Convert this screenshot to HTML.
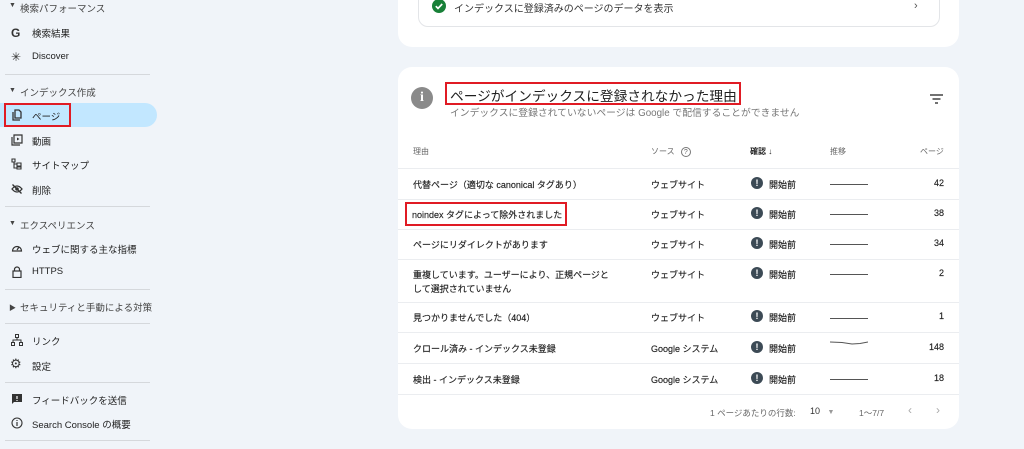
<!DOCTYPE html>
<html><head><meta charset="utf-8"><style>
*{box-sizing:border-box;margin:0;padding:0}
body{width:1024px;height:449px;overflow:hidden;background:#f0f4f9;font-family:"Liberation Sans","Noto Sans CJK JP",sans-serif;color:#1f1f1f;position:relative}
.a{position:absolute;white-space:nowrap}
.sb{font-size:9.5px;color:#1f1f1f}
.sec{font-size:9.5px;color:#444}
.hr{position:absolute;left:5px;width:145px;height:1px;background:#d5d8dc}
.ic{position:absolute;left:11px;width:12px;height:12px}
.card{position:absolute;background:#fff;border-radius:14px}
.t{font-size:9px;color:#1f1f1f;-webkit-text-stroke:0.15px #1f1f1f}
.row{position:absolute;left:398px;width:561px;height:1px;background:#ebedf0}
.ex{position:absolute;left:751px;width:12px;height:12px;border-radius:50%;background:#3c4a55;color:#fff;font-size:9px;font-weight:bold;text-align:center;line-height:12px}
.spark{position:absolute;left:830px;width:38px;height:1px;background:#555}
</style></head><body>
<!-- sidebar -->
<div class="a sec" style="left:9px;top:2px;font-size:7px">▼</div><div class="a sec" style="left:20px;top:1px">検索パフォーマンス</div>
<div class="a" style="left:11px;top:26px;font-weight:bold;font-size:12px;color:#333">G</div><div class="a sb" style="left:32px;top:26px">検索結果</div>
<div class="a" style="left:11px;top:50px;font-size:12px;color:#333">✳</div><div class="a sb" style="left:32px;top:51px">Discover</div>
<div class="hr" style="top:74px"></div>
<div class="a sec" style="left:9px;top:87px;font-size:7px">▼</div><div class="a sec" style="left:20px;top:85px">インデックス作成</div>
<div class="a" style="left:0;top:103px;width:157px;height:24px;background:#c2e7ff;border-radius:0 12px 12px 0"></div>
<div class="a" style="left:4px;top:103px;width:67px;height:24px;border:2px solid #e01b24"></div>
<svg class="ic" style="top:109px" viewBox="0 0 12 12"><path d="M2 3v8h7M4 1h4l2 2v6H4z" fill="none" stroke="#333" stroke-width="1.3"/></svg>
<div class="a sb" style="left:32px;top:109px">ページ</div>
<svg class="ic" style="top:134px" viewBox="0 0 12 12"><path d="M1 3v8h8M3 1h8v8H3z" fill="none" stroke="#333" stroke-width="1.2"/><path d="M6 3.5v3l2.5-1.5z" fill="#333"/></svg>
<div class="a sb" style="left:32px;top:134px">動画</div>
<svg class="ic" style="top:158px" viewBox="0 0 12 12"><path d="M1 1h3v3H1zM3 4v6h3M3 6h3M6 5h4v3H6zM6 9h4v2H6z" fill="none" stroke="#333" stroke-width="1.1"/></svg>
<div class="a sb" style="left:32px;top:158px">サイトマップ</div>
<svg class="ic" style="top:183px" viewBox="0 0 12 12"><path d="M1 6q5-6 10 0q-5 6-10 0z" fill="none" stroke="#333" stroke-width="1.3"/><circle cx="6" cy="6" r="1.8" fill="#333"/><path d="M1.5 1.5l9 9" stroke="#333" stroke-width="1.3"/></svg>
<div class="a sb" style="left:32px;top:183px">削除</div>
<div class="hr" style="top:206px"></div>
<div class="a sec" style="left:9px;top:220px;font-size:7px">▼</div><div class="a sec" style="left:20px;top:218px">エクスペリエンス</div>
<svg class="ic" style="top:242px" viewBox="0 0 12 12"><path d="M1.5 9a4.5 4.5 0 1 1 9 0z" fill="none" stroke="#333" stroke-width="1.2"/><path d="M6 8l2-3" stroke="#333" stroke-width="1.2"/></svg>
<div class="a sb" style="left:32px;top:242px">ウェブに関する主な指標</div>
<svg class="ic" style="top:266px" viewBox="0 0 12 12"><rect x="2" y="5" width="8" height="6.5" fill="none" stroke="#333" stroke-width="1.2"/><path d="M3.5 5V3.5a2.5 2.5 0 0 1 5 0V5" fill="none" stroke="#333" stroke-width="1.2"/></svg>
<div class="a sb" style="left:32px;top:266px">HTTPS</div>
<div class="hr" style="top:289px"></div>
<div class="a sec" style="left:9px;top:303px;font-size:7px">▶</div><div class="a sec" style="left:20px;top:300px">セキュリティと手動による対策</div>
<div class="hr" style="top:323px"></div>
<svg class="ic" style="top:334px" viewBox="0 0 12 12"><path d="M4.5 .5h3v3h-3zM.5 8.5h3v3h-3zM8.5 8.5h3v3h-3zM6 3.5v2.5M2 8.5V6h8v2.5" fill="none" stroke="#333" stroke-width="1"/></svg>
<div class="a sb" style="left:32px;top:334px">リンク</div>
<div class="a" style="left:10px;top:356px;font-size:13px;color:#333">⚙</div>
<div class="a sb" style="left:32px;top:359px">設定</div>
<div class="hr" style="top:382px"></div>
<svg class="ic" style="top:393px" viewBox="0 0 12 12"><path d="M1 1h10v8H3l-2 2z" fill="#333"/><path d="M6 3v3M6 7v1" stroke="#fff" stroke-width="1.2"/></svg>
<div class="a sb" style="left:32px;top:393px">フィードバックを送信</div>
<svg class="ic" style="top:417px" viewBox="0 0 12 12"><circle cx="6" cy="6" r="5" fill="none" stroke="#333" stroke-width="1.1"/><path d="M6 5v4M6 3v1" stroke="#333" stroke-width="1.2"/></svg>
<div class="a sb" style="left:32px;top:417px">Search Console の概要</div>
<div class="hr" style="top:440px"></div>

<!-- top card -->
<div class="card" style="left:398px;top:-20px;width:561px;height:67px"></div>
<div class="a" style="left:418px;top:-10px;width:522px;height:37px;border:1px solid #e3e5e8;border-radius:10px"></div>
<svg class="a" style="left:432px;top:-1px" width="14" height="14" viewBox="0 0 14 14"><circle cx="7" cy="7" r="7" fill="#188038"/><path d="M3.8 7.2l2.2 2.2 4.2-4.4" fill="none" stroke="#fff" stroke-width="1.7"/></svg>
<div class="a" style="left:454px;top:0px;font-size:10px;color:#333">インデックスに登録済みのページのデータを表示</div>
<div class="a" style="left:914px;top:0px;font-size:11px;color:#555">›</div>

<!-- main card -->
<div class="card" style="left:398px;top:67px;width:561px;height:362px"></div>
<div class="a" style="left:411px;top:87px;width:22px;height:22px;border-radius:50%;background:#8a8a8a;color:#fff;font-weight:bold;font-size:14px;text-align:center;line-height:22px;font-family:'Liberation Serif',serif">i</div>
<div class="a" style="left:445px;top:82px;width:296px;height:23px;border:2px solid #e01b24"></div>
<div class="a" style="left:450px;top:85px;font-size:13.7px;color:#1f1f1f">ページがインデックスに登録されなかった理由</div>
<div class="a" style="left:450px;top:105px;font-size:9.8px;color:#777">インデックスに登録されていないページは Google で配信することができません</div>
<svg class="a" style="left:930px;top:94px" width="13" height="10" viewBox="0 0 13 10"><path d="M0 1h13M2.5 5h8M5 9h3" stroke="#444" stroke-width="1.4"/></svg>

<div class="a" style="left:413px;top:146px;font-size:8px;color:#666">理由</div>
<div class="a" style="left:651px;top:146px;font-size:8px;color:#666">ソース <span style="display:inline-block;width:10px;height:10px;border:1px solid #777;border-radius:50%;font-size:7px;text-align:center;line-height:9px;margin-left:4px">?</span></div>
<div class="a" style="left:750px;top:146px;font-size:8px;color:#222;font-weight:bold">確認 <span style="font-weight:normal">↓</span></div>
<div class="a" style="left:830px;top:146px;font-size:8px;color:#666">推移</div>
<div class="a" style="left:920px;top:146px;font-size:8px;color:#666">ページ</div>

<div class="row" style="top:168px"></div>
<div class="row" style="top:199px"></div>
<div class="row" style="top:229px"></div>
<div class="row" style="top:259px"></div>
<div class="row" style="top:302px"></div>
<div class="row" style="top:332px"></div>
<div class="row" style="top:363px"></div>
<div class="row" style="top:394px"></div>

<div class="a t" style="left:413px;top:178px">代替ページ（適切な canonical タグあり）</div>
<div class="a t" style="left:412px;top:208px">noindex タグによって除外されました</div>
<div class="a" style="left:405px;top:202px;width:162px;height:24px;border:2px solid #e01b24"></div>
<div class="a t" style="left:413px;top:238px">ページにリダイレクトがあります</div>
<div class="a t" style="left:413px;top:268px;white-space:normal;width:200px;line-height:14px">重複しています。ユーザーにより、正規ページとして選択されていません</div>
<div class="a t" style="left:413px;top:311px">見つかりませんでした（404）</div>
<div class="a t" style="left:413px;top:342px">クロール済み - インデックス未登録</div>
<div class="a t" style="left:413px;top:373px">検出 - インデックス未登録</div>

<div class="a t" style="left:651px;top:178px">ウェブサイト</div>
<div class="a t" style="left:651px;top:208px">ウェブサイト</div>
<div class="a t" style="left:651px;top:238px">ウェブサイト</div>
<div class="a t" style="left:651px;top:268px">ウェブサイト</div>
<div class="a t" style="left:651px;top:311px">ウェブサイト</div>
<div class="a t" style="left:651px;top:342px">Google システム</div>
<div class="a t" style="left:651px;top:373px">Google システム</div>

<div class="ex" style="top:177px">!</div><div class="a t" style="left:769px;top:178px">開始前</div>
<div class="ex" style="top:207px">!</div><div class="a t" style="left:769px;top:208px">開始前</div>
<div class="ex" style="top:237px">!</div><div class="a t" style="left:769px;top:238px">開始前</div>
<div class="ex" style="top:267px">!</div><div class="a t" style="left:769px;top:268px">開始前</div>
<div class="ex" style="top:310px">!</div><div class="a t" style="left:769px;top:311px">開始前</div>
<div class="ex" style="top:341px">!</div><div class="a t" style="left:769px;top:342px">開始前</div>
<div class="ex" style="top:372px">!</div><div class="a t" style="left:769px;top:373px">開始前</div>

<div class="spark" style="top:184px"></div>
<div class="spark" style="top:214px"></div>
<div class="spark" style="top:244px"></div>
<div class="spark" style="top:274px"></div>
<div class="spark" style="top:318px"></div>
<svg class="a" style="left:830px;top:340px" width="38" height="6"><path d="M0 2l12 0.5 10 1.5 8-0.5 8-1.5" fill="none" stroke="#555" stroke-width="1"/></svg>
<div class="spark" style="top:379px"></div>

<div class="a t" style="left:900px;top:178px;width:44px;text-align:right">42</div>
<div class="a t" style="left:900px;top:208px;width:44px;text-align:right">38</div>
<div class="a t" style="left:900px;top:238px;width:44px;text-align:right">34</div>
<div class="a t" style="left:900px;top:268px;width:44px;text-align:right">2</div>
<div class="a t" style="left:900px;top:311px;width:44px;text-align:right">1</div>
<div class="a t" style="left:900px;top:342px;width:44px;text-align:right">148</div>
<div class="a t" style="left:900px;top:373px;width:44px;text-align:right">18</div>

<div class="a" style="left:710px;top:407px;font-size:8.5px;color:#666">1 ページあたりの行数:</div>
<div class="a" style="left:810px;top:406px;font-size:9px;color:#333">10 <span style="color:#999;font-size:7px;margin-left:5px">▼</span></div>
<div class="a" style="left:859px;top:407px;font-size:8.5px;color:#666">1〜7/7</div>
<div class="a" style="left:908px;top:403px;font-size:12px;color:#aaa">‹</div>
<div class="a" style="left:936px;top:403px;font-size:12px;color:#aaa">›</div>
</body></html>
